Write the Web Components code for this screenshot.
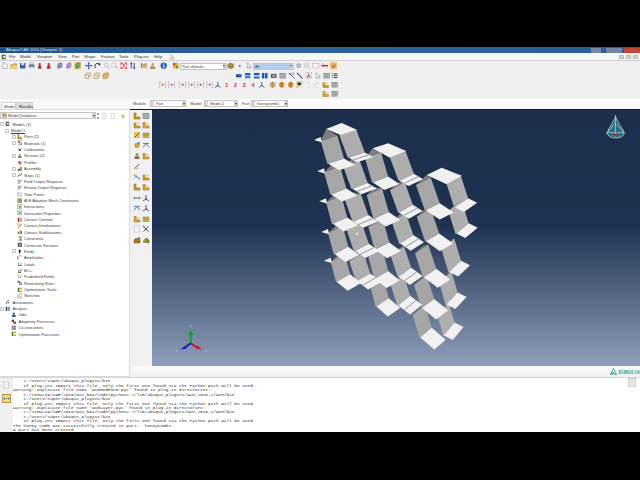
<!DOCTYPE html>
<html>
<head>
<meta charset="utf-8">
<title>Abaqus/CAE</title>
<style>
    html, body { margin: 0; background: #000; }
    body { width: 640px; height: 480px; overflow: hidden; font-family: "Liberation Sans", Arial, sans-serif; }
</style>
</head>
<body>
<abaqus-app></abaqus-app>

<script>
// 小图标, viewBox 0 0 8 8
const ICONS = {
    new: `<path d="M2 1h3l1.5 1.5V7H2z" fill="#fff" stroke="#667"/>`,
    open: `<path d="M1 3h2l1-1h3v5H1z" fill="#e8b93c" stroke="#96701a"/><path d="M1 7l1-3h6L7 7z" fill="#f6d672"/>`,
    save: `<rect x="1" y="1" width="6" height="6" fill="#3a5fa8"/><rect x="2.4" y="1" width="3.2" height="2.4" fill="#dde"/>`,
    print: `<rect x="2" y="1" width="4" height="2" fill="#fff" stroke="#667"/><rect x="1" y="3" width="6" height="3" fill="#5a6fa0"/><rect x="2" y="5" width="4" height="2" fill="#dde"/>`,
    fig: `<path d="M4 1a1.2 1.2 0 1 1-.01 0zM2.6 3.6h2.8L6 7H2z" fill="#c8242c"/><rect x="2" y="6" width="4" height="1.4" fill="#678"/>`,
    blockb: `<path d="M1.5 2.5h3.5v4.5H1.5z" fill="#6d88b0"/><path d="M3 1h3.5v4.5H3z" fill="#8aa0c4" stroke="#567"/>`,
    blockp: `<path d="M1.5 2.5h3.5v4.5H1.5z" fill="#9a86ac"/><path d="M3 1h3.5v4.5H3z" fill="#b6a6c6" stroke="#768"/>`,
    blockg: `<rect width="8" height="8" fill="#e9c87c"/><path d="M1.5 2.5h3.5v4.5H1.5z" fill="#5f9a58"/><path d="M3 1h3.5v4.5H3z" fill="#7ab070" stroke="#464"/>`,
    move: `<path d="M4 .6v6.8M.6 4h6.8" stroke="#2456a6" stroke-width="1"/><path d="M4 0l1.2 1.6H2.8zM4 8l1.2-1.6H2.8zM0 4l1.6-1.2v2.4zM8 4L6.4 2.8v2.4z" fill="#2456a6"/>`,
    rotate: `<path d="M1.6 6.4a3 3 0 0 1 4-4.4" fill="none" stroke="#223" stroke-width="1"/><path d="M7 1.2L6.6 4 4.4 2.4z" fill="#223"/>`,
    zoom: `<circle cx="3.4" cy="3.2" r="2" fill="#eef" stroke="#99a"/><path d="M5 5l2.2 2.2" stroke="#c8b080" stroke-width="1"/>`,
    boxzoom: `<rect x="1" y="1" width="4.5" height="4.5" fill="none" stroke="#c8a8b0"/><path d="M5 5l2.4 2.4" stroke="#c8a0a0" stroke-width="1"/>`,
    fit: `<path d="M1 1h2M1 1v2M7 1H5M7 1v2M1 7h2M1 7V5M7 7H5M7 7V5" stroke="#d0202c" stroke-width="1"/><rect x="3" y="2" width="2" height="4" fill="#e0606a"/>`,
    arrows: `<path d="M2.4 7V1.6M5.6 1v5.4" stroke="#1d3f88" stroke-width="1"/><path d="M2.4 0l1.4 2H1zM5.6 8l1.4-2H4.2z" fill="#1d3f88"/>`,
    pane: `<path d="M1.5 1v6M6.5 1v6" stroke="#8a6a38" stroke-width="1"/><rect x="2.4" y="2" width="3.2" height="4" fill="#c8a468"/>`,
    pin: `<path d="M4 1L2.2 6h3.6z" fill="#d8b878" stroke="#8a6a38"/><rect x="1" y="6" width="6" height="1.2" fill="#8a6a38"/>`,
    info: `<circle cx="4" cy="4" r="3.4" fill="#2a5fb0"/><rect x="3.4" y="3.2" width="1.2" height="3" fill="#fff"/><rect x="3.4" y="1.6" width="1.2" height="1" fill="#fff"/>`,
    wheel: `<rect x="1" y="1" width="3" height="3" fill="#d83c30"/><rect x="4" y="1" width="3" height="3" fill="#e8b428"/><rect x="1" y="4" width="3" height="3" fill="#e8b428"/><rect x="4" y="4" width="3" height="3" fill="#5a9a48"/>`,
    cube: `<path d="M1 2.5L4 1l3 1.5v3.4L4 7.4 1 5.9z" fill="#b08a48" stroke="#7a5c28"/>`,
    cubeo: `<path d="M1 3h4v4H1zM3 1h4v4H5M1 3l2-2" fill="#f2ead8" stroke="#a8925c" stroke-width=".7"/>`,
    cubey: `<path d="M1 3h4v4H1z" fill="#e8c868" stroke="#a8863c" stroke-width=".7"/><path d="M1 3l2-2h4v4L5 7V3zM5 3l2-2" fill="#f0d880" stroke="#a8863c" stroke-width=".7"/>`,
    arrow: `<path d="M2.4 3.4h3.2L4 5.4z" fill="#555"/>`,
    cursor: `<path d="M2.4 .8v6l1.5-1.4 1 2 1-.5-1-2h2z" fill="#fff" stroke="#667"/>`,
    gear: `<circle cx="4" cy="4" r="2.6" fill="#a8a8a8"/><circle cx="4" cy="4" r="1" fill="#e8e8e8"/>`,
    target: `<circle cx="3.6" cy="3.6" r="2.6" fill="#eee" stroke="#aab"/><circle cx="3.6" cy="3.6" r="1" fill="none" stroke="#aab"/><path d="M5.6 5.6L7.4 7.4" stroke="#a99" stroke-width=".8"/>`,
    redbox: `<rect x="1" y="1.4" width="6" height="5" fill="#fff" stroke="#c83038" stroke-dasharray="1 .5"/>`,
    redline: `<path d="M.5 4h7" stroke="#c82028" stroke-width="1.6"/><rect x="1" y="1" width="2" height="2" fill="#f4c0a8"/><rect x="5" y="5" width="2" height="2" fill="#f4c0a8"/>`,
    orange: `<rect width="8" height="8" fill="#e8c888"/><path d="M1.5 2h5l-1 4.5h-3z" fill="#d87a30"/><path d="M2 3h4" stroke="#fff"/>`,
    brace: `<path d="M1.4 1H.8v6h.6M6.6 1h.6v6h-.6" fill="none" stroke="#2a62c0" stroke-dasharray="1 .5"/><rect x="3" y="3" width="2" height="2" fill="#e04848"/>`,
    barb: `<rect x="1" y="2.4" width="6" height="3.4" fill="#1d5ba8"/>`,
    bar2: `<rect x="1" y="1.2" width="6" height="2.4" fill="#1d5ba8"/><rect x="1" y="4.4" width="6" height="2.4" fill="#3f7cc8"/>`,
    bar3: `<rect x="1" y="1" width="6" height="2.6" fill="#1d5ba8"/><rect x="1" y="5" width="6" height="2" fill="#1d5ba8"/>`,
    bar4: `<rect x="1" y="1" width="2.6" height="6" fill="#1d5ba8"/><rect x="4.4" y="1" width="2.6" height="6" fill="#1d5ba8"/>`,
    camera: `<rect x="1" y="2" width="6" height="4.4" fill="#2a5fb0"/><circle cx="4" cy="4.2" r="1.5" fill="#e8a830"/>`,
    grid: `<rect x="1" y="1.4" width="6" height="5.2" fill="#cfd8d0" stroke="#557"/><path d="M1 3.2h6M1 5h6M3 1.4v5.2M5 1.4v5.2" stroke="#778"/>`,
    tool: `<path d="M1 1l6 6" stroke="#2456a6" stroke-width="1"/><rect x="1" y="1" width="2" height="2" fill="#d84848"/><rect x="4.5" y="1" width="2" height="2" fill="#ddd" stroke="#889"/>`,
    line: `<path d="M1 1l6 6" stroke="#1d4f9c" stroke-width="1.2"/>`,
    lettera: `<rect x="1" y=".8" width="6" height="6.4" fill="#fff" stroke="#99a"/><path d="M2.4 6.4L4 1.8l1.6 4.6M3 5h2" fill="none" stroke="#c82028" stroke-width=".8"/>`,
    list: `<path d="M1 2h1M3 2h4M1 4h1M3 4h4M1 6h1M3 6h4" stroke="#234" stroke-width="1"/>`,
    triad: `<path d="M4 1v4M4 5L1 7M4 5l3 2" stroke="#1d4f9c" stroke-width=".9" fill="none"/><circle cx="4" cy="5" r=".8" fill="#d82028"/>`,
    sphere: `<circle cx="4" cy="4" r="3" fill="#d8b060" stroke="#998"/><path d="M4 1v6" stroke="#668"/>`,
    sphereo: `<circle cx="4" cy="4" r="3" fill="#e09038"/><rect x="3" y="1" width="2" height="6" fill="#b87020"/>`,
    flag: `<rect width="8" height="8" fill="#f4e8c0" stroke="#888"/><path d="M2 7l4-5M2 2h3v2H2z" stroke="#222" fill="#222"/>`,
    undo: `<path d="M2 4a2.4 2.4 0 1 1 2 3" fill="none" stroke="#bbb"/>`,
    redo: `<path d="M6 4a2.4 2.4 0 1 0-2 3" fill="none" stroke="#bbb"/>`,
    yell: `<path d="M1 7V2h2v3h4v2z" fill="#d8a028" stroke="#8a6418"/><rect x="4.4" y="1" width="2" height="2" fill="#e8d080"/>`,
    yell2: `<path d="M1 7V1.5h2.2V5H7v2z" fill="#e0a830" stroke="#9a6a18"/><path d="M4.4 2l2 2" stroke="#c83038"/>`,
    pen: `<rect x="1" y="1" width="6" height="6" fill="#e0c060"/><path d="M1.6 6.4L6.4 1.6" stroke="#7a5c28" stroke-width="1"/>`,
    mesh: `<rect x="1" y="2" width="6" height="4.4" fill="#e8c860" stroke="#8a7030"/><path d="M1 4h6M3 2v4.4M5 2v4.4" stroke="#7a6020"/>`,
    blob: `<circle cx="4" cy="4.4" r="2.6" fill="#e0a030"/><rect x="4" y="1" width="3" height="2.4" fill="#6aa0d0"/>`,
    wire: `<path d="M1 6.4l3-4 3 4M1 2.4h6" fill="none" stroke="#4a7ab0" stroke-width=".9"/>`,
    wiz: `<path d="M1.4 6.6L5.6 2.4" stroke="#8060a8" stroke-width="1"/><path d="M5.6 1l.5 1 1 .5-1 .5-.5 1-.5-1-1-.5 1-.5z" fill="#e0b030"/><rect x="1" y="5.4" width="4" height="1.6" fill="#c8b890"/>`,
    beam: `<path d="M1 2l6 4" stroke="#2a6ab0" stroke-width="1"/><path d="M1 6l3-4" stroke="#889" stroke-width=".6"/><circle cx="1.6" cy="2.2" r="1" fill="#e0b030"/>`,
    dots: `<circle cx="1.6" cy="4" r="1" fill="#2a6ab0"/><circle cx="4" cy="4" r="1" fill="#c8a028"/><circle cx="6.4" cy="4" r="1" fill="#2a6ab0"/>`,
    scis: `<path d="M1.4 6.6L6.6 1.4M1.4 1.4l5.2 5.2" stroke="#345" stroke-width=".9"/><circle cx="1.6" cy="1.6" r="1" fill="#7a9ac0"/>`,
    hand: `<path d="M1 7V4l2-2 1 1 2-2 1 2v4z" fill="#a87a28" stroke="#6a4c14"/>`,
    leaf: `<path d="M1 6l3-4 3 2v3z" fill="#6a9a38" stroke="#466a20"/><circle cx="3" cy="4" r="1.2" fill="#d89028"/>`,
    db: `<rect x="1" y="1.4" width="6" height="5.2" fill="#c8b070" stroke="#6a5a30"/><path d="M1 3h6" stroke="#6a5a30"/>`,
    page: `<rect x="1.5" y="1" width="5" height="6" fill="#fff" stroke="#aab"/><path d="M3 3h2.4M3 5h2.4" stroke="#ccd"/>`,
    sun: `<path d="M4 .8l1 2.2 2.2.4-1.6 1.6.4 2.2L4 6.2 2 7.2l.4-2.2L.8 3.4 3 3z" fill="#d8c850"/>`,
    models: `<rect x="1" y="1" width="5" height="6" fill="#3a4a3a"/><rect x="2.4" y="2.4" width="3" height="3" fill="#dde0d0"/>`,
    part: `<path d="M1 1v6h6V5H3V1z" fill="#d89a20" stroke="#7a5410"/>`,
    mat: `<rect x="1" y="1" width="3" height="3" fill="#6a7a8a"/><rect x="4" y="4" width="3" height="3" fill="#c8d0d8" stroke="#556"/><rect x="4" y="1" width="3" height="3" fill="#fff" stroke="#778"/>`,
    calib: `<path d="M2 2l4 4M6 2L2 6" stroke="#445" stroke-width="1.2"/><circle cx="4" cy="4" r="1.2" fill="#2a4a90"/>`,
    section: `<circle cx="4" cy="2.6" r="1.6" fill="#b89048"/><rect x="1.6" y="4.4" width="4.8" height="2.6" fill="#7a6a50"/>`,
    profile: `<path d="M1 4h6M4 1v6" stroke="#b04a30" stroke-width="1.6"/>`,
    assembly: `<rect x="1" y="4" width="3" height="3" fill="#405a90"/><rect x="4" y="1.4" width="3" height="5.6" fill="#b88830"/>`,
    steps: `<path d="M1 7l2-3 2 1 2-4" fill="none" stroke="#334" stroke-width="1"/>`,
    output: `<path d="M1 2h3M1 4h5M1 6h3" stroke="#446" stroke-width=".9"/><rect x="5" y="1" width="2" height="2" fill="#c89830"/>`,
    time: `<path d="M1 2v5h6V3H3L2.6 2z" fill="#eee" stroke="#667"/>`,
    ale: `<path d="M1 1h6v6H1z" fill="#c8b078" stroke="#6a5428"/><path d="M1 4h6M4 1v6" stroke="#6a5428"/>`,
    interact: `<rect x="1" y="1" width="6" height="6" fill="#d8e0d0" stroke="#5a8a70"/><rect x="3" y="3" width="2" height="2" fill="#3a7a50"/>`,
    control: `<rect x="1" y="1" width="2.4" height="6" fill="#b02830"/><rect x="4.6" y="1" width="2.4" height="6" fill="#d8a030"/>`,
    init: `<path d="M1 7l5-6 1 1-5 6z" fill="#d87030"/><rect x="1" y="1" width="3" height="3" fill="#f0e0a0" stroke="#a88"/>`,
    stab: `<rect x="1" y="4" width="2" height="3" fill="#3a8a50"/><rect x="3.4" y="2" width="2" height="5" fill="#c89030"/><rect x="5.6" y="3" width="1.6" height="4" fill="#3a5aa0"/>`,
    constr: `<path d="M2 1h4v2H4v2h2v2H2" fill="none" stroke="#3a6a40" stroke-width="1"/><rect x="5" y="3" width="2" height="2" fill="#d8b030"/>`,
    conn: `<rect x="1" y="1" width="6" height="6" fill="#5a5a5a"/><rect x="2.4" y="2.4" width="3.2" height="3.2" fill="#a89880"/>`,
    fields: `<path d="M3 1h3L4.4 4H6L2.6 7.4 3.4 4.6H2z" fill="#222"/>`,
    amp: `<path d="M1 1.4V7M1 6c2-6 3-6 6-4" fill="none" stroke="#a05070" stroke-width=".8"/>`,
    load: `<path d="M2.4 1v5M5.6 3v3" stroke="#6a78a8" stroke-width="1"/><rect x="1" y="6" width="6" height="1.2" fill="#b04050"/>`,
    bc: `<path d="M2 1v4h4v2H1.4V1z" fill="#806a48"/><rect x="4" y="2" width="3" height="2" fill="#6a88a8"/>`,
    pred: `<path d="M1 6l2-2 2 1 2-3" fill="none" stroke="#3a8a50" stroke-width="1"/><rect x="1" y="1" width="2" height="2" fill="#d8a830"/>`,
    remesh: `<rect x="1" y="1" width="3" height="3" fill="#4a6a8a"/><rect x="3.6" y="3.6" width="3.4" height="3.4" fill="#b0b8c0" stroke="#456"/>`,
    opt: `<rect x="1" y="1" width="2.2" height="6" fill="#3a8a40"/><rect x="3.2" y="1" width="3.8" height="2" fill="#d89020"/><rect x="3.2" y="5" width="3.8" height="2" fill="#d89020"/>`,
    sketch: `<path d="M1 2v5h6" fill="none" stroke="#b07040" stroke-width=".9"/><rect x="3" y="1" width="4" height="4" fill="#f0e8d8" stroke="#b08868"/>`,
    annot: `<path d="M2 7l1-3 3-3" fill="none" stroke="#223" stroke-width="1"/><circle cx="5.4" cy="5.4" r="1" fill="#556"/>`,
    analysis: `<rect x="1" y="1" width="2.4" height="6" fill="#2a4a7a"/><rect x="4.6" y="1" width="2.4" height="6" fill="#5a8ab8"/>`,
    jobs: `<circle cx="4" cy="2.4" r="1.6" fill="#2a4a9a"/><rect x="1.4" y="4.2" width="5.2" height="2.8" fill="#2a4a9a"/>`,
    adapt: `<rect x="1" y="1" width="3.4" height="3.4" fill="#3a4a6a"/><rect x="3.6" y="3.6" width="3.4" height="3.4" fill="#b83838"/>`,
    coexec: `<rect x="1" y="1" width="6" height="6" fill="#8a7a9a"/><path d="M1 4h6M4 1v6" stroke="#eee"/>`
}

// 单个图标
class UiIcon extends HTMLElement {
    connectedCallback() {
        if (this.shadowRoot) return
        this.attachShadow({mode: "open"})
        let kind = this.getAttribute("k")
        this.shadowRoot.innerHTML = `
<style>
    :host { display: block; width: var(--icon-size, 8px); height: var(--icon-size, 8px); flex: none; }
    svg { display: block; width: 100%; height: 100%; }
</style>
<svg viewBox="0 0 8 8" stroke-width=".5">${ICONS[kind] || ""}</svg>`
    }
}
customElements.define("ui-icon", UiIcon)

// 一组工具按钮, items 用空格分隔, | 是分隔, #n 是红色数字
class ToolGroup extends HTMLElement {
    connectedCallback() {
        if (this.shadowRoot) return
        this.attachShadow({mode: "open"})
        let html = this.getAttribute("items").trim().split(/\s+/).map(item => {
            if (item === "|") return `<i></i>`
            if (item[0] === "#") return `<b>${item.slice(1)}</b>`
            return `<span><ui-icon k="${item}"></ui-icon></span>`
        }).join("")
        this.shadowRoot.innerHTML = `
<style>
    :host { display: flex; align-items: center; flex: none; --icon-size: 7.4px; }
    span, b { display: flex; align-items: center; justify-content: center; width: 8.75px; height: 9px; }
    b { color: #c8202c; font: bold 5.2px "Liberation Sans", sans-serif; }
    i { display: block; width: 2.6px; }
</style>
${html}`
    }
}
customElements.define("tool-group", ToolGroup)

const toolRowTemplate = document.createElement("template")
toolRowTemplate.innerHTML = `
<style>
    :host { display: flex; align-items: center; height: 9.3px; }
</style>
<slot></slot>`
class ToolRow extends HTMLElement {
    constructor() {
        super()
        this.attachShadow({mode: "open"})
        this.shadowRoot.appendChild(toolRowTemplate.content.cloneNode(true))
    }
}
customElements.define("tool-row", ToolRow)

// 下拉框
const uiComboTemplate = document.createElement("template")
uiComboTemplate.innerHTML = `
<style>
    :host { display: flex; flex: none; height: 7px; box-sizing: border-box; background: var(--combo-bg, #fff); border: 1px solid #c4c4c4; font: 3.9px "Liberation Sans", sans-serif; color: #444; align-items: center; }
    .spin, .drop { flex: none; width: 3px; height: 100%; background: #d8d8d8; position: relative; }
    .spin { display: none; margin-right: 1px; }
    :host([spin]) .spin { display: block; }
    .drop::after { content: ""; position: absolute; left: .5px; top: 1.5px; border: 1px solid transparent; border-top: 2px solid #444; }
    .text { flex: 1; display: flex; align-items: center; gap: 1px; padding-left: 1px; white-space: nowrap; overflow: hidden; }
</style>
<div class="spin"></div><div class="text"><slot></slot></div><div class="drop"></div>`
class UiCombo extends HTMLElement {
    constructor() {
        super()
        this.attachShadow({mode: "open"})
        this.shadowRoot.appendChild(uiComboTemplate.content.cloneNode(true))
    }
}
customElements.define("ui-combo", UiCombo)

// 标题栏
const titleBarTemplate = document.createElement("template")
titleBarTemplate.innerHTML = `
<style>
    :host { display: flex; align-items: center; height: 6px; background: linear-gradient(90deg, #1f5288, #2f6299 50%, #2c5f96); color: #dfe6ee; font: 4px/6px "Liberation Sans", sans-serif; padding-left: 6px; }
    .title { flex: 1; }
    .btn { height: 5px; }
    .min { width: 10px; background: #7c8ca0; margin-right: 5px; }
    .max { width: 16px; background: #6f87a4; margin-right: 2px; }
    .close { width: 16px; background: #c4483a; }
</style>
<div class="title"><slot></slot></div>
<div class="btn min"></div><div class="btn max"></div><div class="btn close"></div>`
class TitleBar extends HTMLElement {
    constructor() {
        super()
        this.attachShadow({mode: "open"})
        this.shadowRoot.appendChild(titleBarTemplate.content.cloneNode(true))
    }
}
customElements.define("title-bar", TitleBar)

// 菜单项
class MenuItem extends HTMLElement {
    connectedCallback() {
        if (this.shadowRoot) return
        this.attachShadow({mode: "open"})
        this.shadowRoot.innerHTML = `
<style>
    :host { display: block; flex: none; width: ${this.getAttribute("w")}px; }
</style>
<slot></slot>`
    }
}
customElements.define("menu-item", MenuItem)

const menuBarTemplate = document.createElement("template")
menuBarTemplate.innerHTML = `
<style>
    :host { display: flex; align-items: center; height: 8px; box-sizing: border-box; border-bottom: 1px solid #cfcfcf; background: #f6f6f4; color: #333; font: 4px/7px "Liberation Sans", sans-serif; padding-left: 1px; --icon-size: 6px; }
    .spacer { flex: 1; }
    .win { width: 5px; height: 4px; background: #d4d8de; border: 1px solid #bbb; box-sizing: border-box; margin-right: 2px; flex: none; }
</style>
<slot></slot>
<div class="spacer"></div>
<div class="win"></div><div class="win"></div><div class="win"></div>`
class MenuBar extends HTMLElement {
    constructor() {
        super()
        this.attachShadow({mode: "open"})
        this.shadowRoot.appendChild(menuBarTemplate.content.cloneNode(true))
    }
}
customElements.define("menu-bar", MenuBar)

// 模型树的一行
class TreeRow extends HTMLElement {
    connectedCallback() {
        if (this.shadowRoot) return
        this.attachShadow({mode: "open"})
        let icon = this.getAttribute("icon")
        this.shadowRoot.innerHTML = `
<style>
    :host { display: flex; align-items: center; height: 6.37px; padding-left: ${this.getAttribute("indent") || 0}px; white-space: nowrap; --icon-size: 5.6px; }
    .exp { width: 4px; height: 4px; box-sizing: border-box; flex: none; margin-right: 1px; }
    :host([exp]) .exp { border: 1px solid #c2c8d0; background: #eef0f4; }
    .ico { width: 6px; margin-right: 1.5px; flex: none; }
    :host([plain]) .ico { display: none; }
    :host([plain]) .lbl { margin-left: 1px; text-decoration: underline; }
</style>
<div class="exp"></div>
<div class="ico"><ui-icon k="${icon || "page"}"></ui-icon></div>
<div class="lbl"><slot></slot></div>`
    }
}
customElements.define("tree-row", TreeRow)

// 左侧模型树
const modelTreeTemplate = document.createElement("template")
modelTreeTemplate.innerHTML = `
<style>
    :host { display: flex; flex-direction: column; flex: none; width: 130px; background: #f0f0f0; font: 3.9px "Liberation Sans", sans-serif; color: #3a3a3a; }
    .tabs { display: flex; height: 10px; align-items: flex-end; padding-left: 1px; background: #f8f8f8; }
    .tab { height: 7px; line-height: 7px; padding: 0 2px; border: 1px solid #d0d0d0; border-bottom: 0; box-sizing: border-box; }
    .tab.on { width: 15px; background: #fff; }
    .tab.off { width: 17px; background: #e2e2e2; color: #555; font-weight: bold; }
    .box { flex: 1; background: #fff; border: 1px solid #d8d8d8; border-left: 0; box-sizing: border-box; }
    .head { display: flex; align-items: center; height: 9px; margin-top: 1px; margin-bottom: 1px; --icon-size: 6px; }
    .head ui-combo { width: 96px; --combo-bg: #fafafa; }
    .sp { width: 3px; height: 6px; margin: 0 2px 0 1px; background: linear-gradient(#8a9ab0 40%, #fff 40%, #fff 60%, #8a9ab0 60%); }
    .head > ui-icon { margin-right: 3.4px; }
</style>
<div class="tabs"><div class="tab on">Model</div><div class="tab off">Results</div></div>
<div class="box">
    <div class="head">
        <ui-combo><ui-icon k="db" style="--icon-size:5px"></ui-icon><slot name="root"></slot></ui-combo>
        <div class="sp"></div>
        <ui-icon k="page"></ui-icon><ui-icon k="page"></ui-icon><ui-icon k="sun"></ui-icon>
    </div>
    <slot></slot>
</div>`
class ModelTree extends HTMLElement {
    constructor() {
        super()
        this.attachShadow({mode: "open"})
        this.shadowRoot.appendChild(modelTreeTemplate.content.cloneNode(true))
    }
}
customElements.define("model-tree", ModelTree)

// Module / Model / Part 选择条
const moduleBarTemplate = document.createElement("template")
moduleBarTemplate.innerHTML = `
<style>
    :host { display: flex; align-items: center; height: 11px; box-sizing: border-box; padding: 0 0 1px 3px; background: linear-gradient(#ffffff, #f6f6f6); border-bottom: 1px solid #0d1b33; font: 3.9px "Liberation Sans", sans-serif; color: #444; }
    span { flex: none; }
</style>
<span style="width:17px">Module:</span>
<ui-combo spin style="width:36px">Part</ui-combo>
<span style="width:13.5px;margin-left:4.5px">Model:</span>
<ui-combo spin style="width:34px">Model-1</ui-combo>
<span style="width:9px;margin-left:4px">Part:</span>
<ui-combo spin style="width:37px">honeycomb1</ui-combo>`
class ModuleBar extends HTMLElement {
    constructor() {
        super()
        this.attachShadow({mode: "open"})
        this.shadowRoot.appendChild(moduleBarTemplate.content.cloneNode(true))
    }
}
customElements.define("module-bar", ModuleBar)

// 左边竖直工具箱
const toolBoxTemplate = document.createElement("template")
toolBoxTemplate.innerHTML = `
<style>
    :host { display: flex; flex-direction: column; flex: none; width: 22px; box-sizing: border-box; padding: 1px 2px 0 2.5px; background: #f1f1f1; --icon-size: 8px; }
    .r { display: flex; gap: 1.4px; height: 9.6px; align-items: center; }
    .g { margin-bottom: 1.8px; }
</style>
<div class="r"><ui-icon k="part"></ui-icon><ui-icon k="grid"></ui-icon></div>
<div class="r"><ui-icon k="yell"></ui-icon><ui-icon k="yell2"></ui-icon></div>
<div class="r"><ui-icon k="pen"></ui-icon><ui-icon k="mesh"></ui-icon></div>
<div class="r g"><ui-icon k="blob"></ui-icon><ui-icon k="wire"></ui-icon></div>
<div class="r"><ui-icon k="section"></ui-icon><ui-icon k="yell2"></ui-icon></div>
<div class="r g"><ui-icon k="wiz"></ui-icon></div>
<div class="r"><ui-icon k="beam"></ui-icon><ui-icon k="yell"></ui-icon></div>
<div class="r g"><ui-icon k="part"></ui-icon><ui-icon k="yell2"></ui-icon></div>
<div class="r"><ui-icon k="dots"></ui-icon><ui-icon k="triad"></ui-icon></div>
<div class="r g"><ui-icon k="wire"></ui-icon><ui-icon k="triad"></ui-icon></div>
<div class="r"><ui-icon k="yell2"></ui-icon><ui-icon k="mesh"></ui-icon></div>
<div class="r g"><ui-icon k="page"></ui-icon><ui-icon k="scis"></ui-icon></div>
<div class="r"><ui-icon k="hand"></ui-icon><ui-icon k="leaf"></ui-icon></div>`
class ToolBox extends HTMLElement {
    constructor() {
        super()
        this.attachShadow({mode: "open"})
        this.shadowRoot.appendChild(toolBoxTemplate.content.cloneNode(true))
    }
}
customElements.define("tool-box", ToolBox)

// 蜂窝模型, 坐标是截图里的像素, 每行列 A..F 的左上角
const HONEY_ROWS = [
    {0: [320.7, 141], 1: [339.3, 135]},
    {0: [324, 172.3], 1: [343.3, 166.7], 2: [365, 158.3], 3: [390, 157.7]},
    {0: [326, 202.3], 1: [345, 200], 2: [366.7, 195], 3: [390, 190], 4: [416, 185], 5: [446.7, 184.3]},
    {0: [328, 233], 1: [346.7, 230], 2: [368.3, 226.7], 3: [391.7, 221.7], 4: [416.7, 216.7], 5: [448.3, 211]},
    {0: [330.7, 261.7], 1: [349.3, 261], 2: [368.3, 256.7], 3: [390.7, 255.7], 4: [415, 253.3], 5: [441.7, 250]},
    {2: [370, 285], 3: [390.7, 285], 4: [414, 285], 5: [439.3, 283.3]},
    {4: [412.7, 315], 5: [437.3, 315]}
]
const HONEY_WIDTH = [[16.7, -5.5], [17, -5.5], [16.7, -5.5], [16, -6.5], [16, -6], [15, -8]]
const HONEY_SIDE = [[6.7, 23], [8.5, 23], [7.5, 25], [9, 24], [10, 27], [8.5, 25]]
const HONEY_DEPTH = [[11, 6.5], [8.5, 4.5], [11.5, 7], [8.5, 4.5], [14, 8], [9, 4.5]]
// 顶上的白面, 还有它下面的列
const HONEY_TOPS = [
    {row: 0, col: 0, pts: [[326, 129], [341.7, 123], [356.7, 129.7], [340.7, 135]]},
    {row: 1, col: 2, pts: [[372.7, 148.3], [388.3, 143.3], [406, 151], [390, 157.7]]},
    {row: 2, col: 4, pts: [[426.7, 175], [441.7, 167.7], [461.7, 175.7], [446.7, 184.3]]}
]

const poly = (pts, fill) => `<polygon points="${pts.map(p => p[0].toFixed(1) + "," + p[1].toFixed(1)).join(" ")}" fill="${fill}"/>`
const add = (p, d, k = 1) => [p[0] + d[0] * k, p[1] + d[1] * k]

function honeycombSvg() {
    // 灰面和深色三角先画, 白面和小白片盖在上面
    let back = ""
    let front = ""
    HONEY_ROWS.forEach((row, r) => {
        // 透视: 越往下宽度越窄, 斜度越大
        let t = r / 6
        Object.keys(row).forEach(key => {
            let c = +key
            let tl = row[c]
            let width = [HONEY_WIDTH[c][0] * (1 - 0.25 * t), HONEY_WIDTH[c][1] * (1 + 0.7 * t)]
            let side = [HONEY_SIDE[c][0] * (1 - 0.3 * t), HONEY_SIDE[c][1] * (1 - 0.15 * t)]
            let narrow = c === 1 || c === 3
            let depth = narrow
                ? [HONEY_DEPTH[c][0] * (1 + 0.5 * t), HONEY_DEPTH[c][1] * (1 + 1.2 * t)]
                : [HONEY_DEPTH[c][0], HONEY_DEPTH[c][1] * (c === 5 ? 1 : 1 + 0.5 * t)]

            let tr = add(tl, width)
            let bl = add(tl, side)
            let br = add(tr, side)
            back += poly([tl, tr, br, bl], c % 2 ? "#aeaeae" : "#a6a6a6")

            let top = HONEY_TOPS.find(h => h.col === c && h.row === r)
            let isTopRight = HONEY_TOPS.some(h => h.col + 1 === c && h.row === r)
            if (!isTopRight) {
                let apex = top ? top.pts[0] : add(tl, [8, -7.5])
                back += poly([tl, apex, tr], "#7e7e7e")
            }

            let p1 = add(bl, width, 0.05)
            let p3 = add(br, depth)
            let p4 = add(p1, depth)
            front += poly([p1, br, p3, p4], "#f1f1f1")
            if (narrow) {
                let a = add(p1, depth, 0.5)
                let b = add(br, depth, 0.5)
                front += `<path d="M${a[0]} ${a[1]}L${b[0]} ${b[1]}" stroke="#555" stroke-width=".6"/>`
            }

            if (c === 0) front += poly([add(tl, [-6.7, -1]), add(tl, [0, -4]), add(tl, [1, 1.3])], "#f1f1f1")
        })
    })
    HONEY_TOPS.forEach(h => { front += poly(h.pts, "#f1f1f1") })
    return back + front
}

// 视口
class HoneycombView extends HTMLElement {
    constructor() {
        super()
        this.attachShadow({mode: "open"})
        this.shadowRoot.innerHTML = `
<style>
    :host { display: block; flex: 1; background: linear-gradient(#1c2e4c, #1f3251 45%, #8e9ebb 100%); }
    svg { display: block; width: 100%; height: 100%; }
    text { font: 4px "Liberation Sans", sans-serif; fill: #b8c0cc; }
</style>
<svg viewBox="152 110 488 256">
    ${honeycombSvg()}
    <path d="M356 231v5l1.2-1 .9 1.8.8-.4-.9-1.8h1.6z" fill="#e8e8e8" stroke="#777" stroke-width=".3"/>

    <g stroke-width="1.8" fill="none">
        <path d="M190.7 343.3V335" stroke="#12a030"/>
        <path d="M190.7 343.3L184 348" stroke="#1818c0"/>
        <path d="M190.7 343.3L198 348" stroke="#c01420"/>
    </g>
    <path d="M191 330l2.4 5h-4.8z" fill="#12a030"/>
    <path d="M180.4 349.4l5-3.6 1.4 2.6z" fill="#1818c0"/>
    <path d="M201.7 349.4l-5.4-.8 1.4-3.2z" fill="#c01420"/>
    <text x="189.6" y="328">Y</text>
    <text x="175.4" y="352">Z</text>
    <text x="204" y="352">X</text>

    <path d="M615.5 116.5C612 125 607.5 129 607.5 133.5 608 139.5 623.5 139.5 623.8 133.5 623.8 129 619 125 615.5 116.5Z" fill="#2b6f82" stroke="#b4c6da" stroke-width=".8"/>
    <path d="M615.5 115v22M615.5 124C611 128 608 130 607.5 133.5M615.5 124C620 128 623 130 623.8 133.5M608 132c3 1 12 1 15.5 0" fill="none" stroke="#d4deea" stroke-width=".6"/>
    <circle cx="615.7" cy="135" r="1.4" fill="#e01818"/>
    <circle cx="606.8" cy="133" r=".9" fill="#8aa040"/>
    <circle cx="624.4" cy="133" r=".9" fill="#8aa040"/>
    <circle cx="615.5" cy="115.6" r=".7" fill="#a8a060"/>
</svg>`
    }
}
customElements.define("honeycomb-view", HoneycombView)

// 视口下面的条, 带 SIMULIA 标志
const statusBandTemplate = document.createElement("template")
statusBandTemplate.innerHTML = `
<style>
    :host { display: flex; justify-content: flex-end; align-items: center; height: 11px; box-sizing: border-box; background: linear-gradient(#fafafa, #f0f0f0); color: #2ba394; font: italic bold 5px "Liberation Sans", sans-serif; letter-spacing: .2px; overflow: hidden; }
    svg { width: 7px; height: 7px; flex: none; margin-right: 1px; }
</style>
<svg viewBox="0 0 8 8"><path d="M4 .5L7.5 7.5H5L3.6 4.6 2.6 7.5H.5zM1 6h4" fill="none" stroke="#2ba394" stroke-width="1"/></svg>
<slot></slot>`
class StatusBand extends HTMLElement {
    constructor() {
        super()
        this.attachShadow({mode: "open"})
        this.shadowRoot.appendChild(statusBandTemplate.content.cloneNode(true))
    }
}
customElements.define("status-band", StatusBand)

// 底部消息区
const messageAreaTemplate = document.createElement("template")
messageAreaTemplate.innerHTML = `
<style>
    :host { display: flex; height: 55px; box-sizing: border-box; border-top: 1px solid #d6d6d6; background: #fff; }
    .side { flex: none; width: 13px; box-sizing: border-box; padding: 3px 0 0 1.5px; background: #f0f0f0; --icon-size: 8px; }
    .side .sel { margin-top: 5px; background: #f4d880; border: 1px solid #b89848; width: 9px; height: 9px; box-sizing: border-box; }
    .text { flex: 1; padding-top: 1.4px; font: 4.4px/4.42px "Liberation Mono", monospace; color: #333; white-space: pre; overflow: hidden; }
    .bar { flex: none; width: 8px; margin-right: 4px; height: 9px; background: #e4e4e4; border: 1px solid #d0d0d0; box-sizing: border-box; }
</style>
<div class="side"><ui-icon k="page"></ui-icon><div class="sel"><ui-icon k="dots" style="--icon-size:7px"></ui-icon></div></div>
<div class="text"><slot></slot></div>
<div class="bar"></div>`
class MessageArea extends HTMLElement {
    constructor() {
        super()
        this.attachShadow({mode: "open"})
        this.shadowRoot.appendChild(messageAreaTemplate.content.cloneNode(true))
    }
}
customElements.define("message-area", MessageArea)

// 整个窗口
const abaqusAppTemplate = document.createElement("template")
abaqusAppTemplate.innerHTML = `
<style>
    :host { display: flex; flex-direction: column; width: 640px; height: 480px; background: #000; overflow: hidden; }
    .tools { height: 38px; box-sizing: border-box; padding-top: .4px; background: #f0f0f0; }
    .work { display: flex; height: 278px; }
    .right { flex: 1; display: flex; flex-direction: column; min-width: 0; }
    .stage { display: flex; height: 256px; }
    .top-black { height: 47px; flex: none; }
    .all { width: 41px; --combo-bg: #b4cdec; }
    .pd { width: 46.5px; margin-left: .4px; }
</style>
<div class="top-black"></div>
<title-bar>Abaqus/CAE 2016 [Viewport: 1]</title-bar>
<menu-bar>
    <menu-item w="8"><ui-icon k="models"></ui-icon></menu-item>
    <menu-item w="11">File</menu-item>
    <menu-item w="16.7">Model</menu-item>
    <menu-item w="21.3">Viewport</menu-item>
    <menu-item w="14">View</menu-item>
    <menu-item w="12">Part</menu-item>
    <menu-item w="17">Shape</menu-item>
    <menu-item w="18">Feature</menu-item>
    <menu-item w="15">Tools</menu-item>
    <menu-item w="20">Plug-ins</menu-item>
    <menu-item w="15">Help</menu-item>
    <menu-item w="6"><ui-icon k="cursor"></ui-icon></menu-item>
</menu-bar>
<div class="tools">
    <tool-row style="padding-left:.6px">
        <tool-group items="new open save print fig fig | blockb blockp blockg | move rotate zoom boxzoom fit arrows | pane pin | info | wheel"></tool-group>
        <ui-combo class="pd">Part defaults</ui-combo>
        <tool-group items="cube arrow"></tool-group>
        <tool-group items="cursor"></tool-group>
        <ui-combo class="all">All</ui-combo>
        <tool-group items="gear target redbox redline orange"></tool-group>
    </tool-row>
    <tool-row>
        <tool-group style="margin-left:83.6px" items="cubeo cubeo cubey"></tool-group>
        <tool-group style="margin-left:124.6px" items="barb bar2 bar3 bar4 camera grid tool line lettera cursor grid list"></tool-group>
    </tool-row>
    <tool-row>
        <tool-group style="margin-left:158.6px" items="brace brace | brace brace brace brace triad #1 #2 #3 #4 triad | sphere sphereo sphereo flag undo redo yell grid"></tool-group>
    </tool-row>
    <tool-row>
        <tool-group style="margin-left:321.6px" items="yell2 grid"></tool-group>
    </tool-row>
</div>
<div class="work">
    <slot name="tree"></slot>
    <div class="right">
        <module-bar></module-bar>
        <div class="stage">
            <tool-box></tool-box>
            <honeycomb-view></honeycomb-view>
        </div>
        <status-band>SIMULIA</status-band>
    </div>
</div>
<slot name="messages"></slot>`
class AbaqusApp extends HTMLElement {
    constructor() {
        super()
        this.attachShadow({mode: "open"})
        this.shadowRoot.appendChild(abaqusAppTemplate.content.cloneNode(true))
    }
    connectedCallback() {
        // 树和消息的内容放在这里, 作为 slot 的内容
        const tree = [
            [0, "models", "Models (1)", 1],
            [5, "", "Model-1", 1, 1],
            [11.5, "part", "Parts (2)", 1],
            [11.5, "mat", "Materials (1)", 1],
            [11.5, "calib", "Calibrations"],
            [11.5, "section", "Sections (2)", 1],
            [11.5, "profile", "Profiles"],
            [11.5, "assembly", "Assembly", 1],
            [11.5, "steps", "Steps (1)", 1],
            [11.5, "output", "Field Output Requests"],
            [11.5, "output", "History Output Requests"],
            [11.5, "time", "Time Points"],
            [11.5, "ale", "ALE Adaptive Mesh Constraints"],
            [11.5, "interact", "Interactions"],
            [11.5, "interact", "Interaction Properties"],
            [11.5, "control", "Contact Controls"],
            [11.5, "init", "Contact Initializations"],
            [11.5, "stab", "Contact Stabilizations"],
            [11.5, "constr", "Constraints"],
            [11.5, "conn", "Connector Sections"],
            [11.5, "fields", "Fields", 1],
            [11.5, "amp", "Amplitudes"],
            [11.5, "load", "Loads"],
            [11.5, "bc", "BCs"],
            [11.5, "pred", "Predefined Fields"],
            [11.5, "remesh", "Remeshing Rules"],
            [11.5, "opt", "Optimization Tasks"],
            [11.5, "sketch", "Sketches"],
            [0, "annot", "Annotations"],
            [0, "analysis", "Analysis", 1],
            [6, "jobs", "Jobs"],
            [6, "adapt", "Adaptivity Processes"],
            [6, "coexec", "Co-executions"],
            [6, "opt", "Optimization Processes"]
        ]
        let modelTree = document.createElement("model-tree")
        modelTree.slot = "tree"
        modelTree.innerHTML = `<span slot="root">Model Database</span>` + tree.map(t =>
            `<tree-row indent="${t[0]}" icon="${t[1]}"${t[3] ? " exp" : ""}${t[4] ? " plain" : ""}>${t[2]}</tree-row>`
        ).join("")
        this.appendChild(modelTree)

        const userPath = "    c:/Users/super/abaqus_plugins/bin"
        const simPath = "    c:/SIMULIA/CAE/2016/win_b64/code/python2.7/lib/abaqus_plugins/WCM_2016-2/WCM/bin"
        const firstOne = "    If plug-ins import this file, only the first one found via the Python path will be used."
        let lines = [
            userPath, firstOne,
            "Warning: Duplicate file name 'wcmRodForm.pyc' found in plug-in directories:",
            simPath, userPath, firstOne,
            "Warning: Duplicate file name 'wcmLayer.pyc' found in plug-in directories:",
            simPath, userPath, firstOne,
            "The honey comb was successfully created in part:  honeycomb1",
            "A part has been created"
        ]
        let messages = document.createElement("message-area")
        messages.slot = "messages"
        messages.textContent = lines.join("\n")
        this.appendChild(messages)
    }
}
customElements.define("abaqus-app", AbaqusApp)
</script>
</body>
</html>
